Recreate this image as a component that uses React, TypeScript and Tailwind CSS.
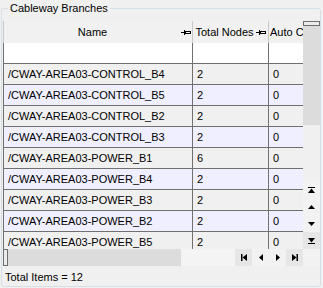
import React from 'react';

const rows = [
  { name: '/CWAY-AREA03-CONTROL_B4', total: '2', auto: '0' },
  { name: '/CWAY-AREA03-CONTROL_B5', total: '2', auto: '0' },
  { name: '/CWAY-AREA03-CONTROL_B2', total: '2', auto: '0' },
  { name: '/CWAY-AREA03-CONTROL_B3', total: '2', auto: '0' },
  { name: '/CWAY-AREA03-POWER_B1', total: '6', auto: '0' },
  { name: '/CWAY-AREA03-POWER_B4', total: '2', auto: '0' },
  { name: '/CWAY-AREA03-POWER_B3', total: '2', auto: '0' },
  { name: '/CWAY-AREA03-POWER_B2', total: '2', auto: '0' },
  { name: '/CWAY-AREA03-POWER_B5', total: '2', auto: '0' },
];

const Pin = () => (
  <svg width="10" height="5" viewBox="0 0 10 5" className="shrink-0">
    <rect x="0" y="2" width="3" height="1" fill="#000" />
    <rect x="3" y="0" width="1" height="5" fill="#000" />
    <rect x="4.5" y="1.5" width="5" height="2" fill="none" stroke="#000" strokeWidth="1" />
  </svg>
);

const Btn = ({ children, dark }: { children: React.ReactNode; dark?: boolean }) => (
  <div className={`w-[17px] h-[17px] shrink-0 flex items-center justify-center ${dark ? 'bg-[#e6e6e6]' : 'bg-[#f2f2f2]'}`}>
    {children}
  </div>
);

export default function App() {
  return (
    <div className="w-[323px] h-[288px] bg-[#f0f0f0] pt-[8px] pl-[1px] font-['Liberation_Sans',Arial,sans-serif] text-[11px] text-black overflow-hidden">
      <div className="relative w-[320px] h-[279px] border border-[#d5dfe5] rounded-[3px] pt-[12px] pl-[1px]">
        <span className="absolute left-[6px] -top-[8px] px-[2px] bg-[#f0f0f0] leading-[14px]">Cableway Branches</span>

        <div className="w-[317px] flex flex-col">
          <div className="flex h-[228px]">
            {/* table */}
            <div className="w-[300px] h-[228px] shrink-0 overflow-hidden flex flex-col">
              <div className="flex h-[22px] shrink-0 border-l border-[#c8c8c8] bg-[#f1f1f1]">
                <div className="w-[189px] shrink-0 flex items-center border-r border-[#c8c8c8] pr-[1px]">
                  <span className="flex-1 text-center">Name</span>
                  <Pin />
                </div>
                <div className="w-[76px] shrink-0 flex items-center border-r border-[#c8c8c8] pr-[2px]">
                  <span className="flex-1 text-center whitespace-nowrap">Total Nodes</span>
                  <Pin />
                </div>
                <div className="w-[80px] shrink-0 flex items-center pl-[1px] whitespace-nowrap">Auto Connect</div>
              </div>

              <div className="flex-1 border-l border-[#707070] overflow-hidden">
                <div className="flex h-[21px] bg-white border-b border-[#707070]">
                  <div className="w-[189px] shrink-0 border-r border-[#707070]" />
                  <div className="w-[76px] shrink-0 border-r border-[#707070]" />
                  <div className="flex-1" />
                </div>
                {rows.map((r, i) => (
                  <div
                    key={r.name}
                    className={`flex h-[21px] border-b border-[#707070] ${i % 2 === 0 ? 'bg-[#f0f0f0]' : 'bg-[#efefff]'}`}
                  >
                    <div className="w-[189px] shrink-0 border-r border-[#707070] pl-[4px] flex items-center whitespace-nowrap overflow-hidden">{r.name}</div>
                    <div className="w-[76px] shrink-0 border-r border-[#707070] pl-[4px] flex items-center">{r.total}</div>
                    <div className="flex-1 pl-[4px] flex items-center">{r.auto}</div>
                  </div>
                ))}
              </div>
            </div>

            {/* vertical scrollbar */}
            <div className="w-[17px] h-[228px] shrink-0 flex flex-col">
              <div className="h-[104px] bg-[#dcdcdc]">
                <div className="h-[5px] border border-[#6e6e6e] bg-[#ececec]" />
              </div>
              <div className="h-[56px] bg-[#f0f0f0]" />
              <Btn>
                <svg width="7" height="6" viewBox="0 0 7 6"><rect x="0" y="0" width="7" height="1" fill="#000" /><polygon points="3.5,1.5 7,6 0,6" fill="#000" /></svg>
              </Btn>
              <Btn>
                <svg width="7" height="4" viewBox="0 0 7 4"><polygon points="3.5,0 7,4 0,4" fill="#000" /></svg>
              </Btn>
              <Btn>
                <svg width="7" height="4" viewBox="0 0 7 4"><polygon points="0,0 7,0 3.5,4" fill="#000" /></svg>
              </Btn>
              <Btn dark>
                <svg width="7" height="6" viewBox="0 0 7 6"><polygon points="0,0 7,0 3.5,4.5" fill="#000" /><rect x="0" y="5" width="7" height="1" fill="#000" /></svg>
              </Btn>
            </div>
          </div>

          {/* horizontal scrollbar + navigator */}
          <div className="flex h-[17px]">
            <div className="w-[178px] shrink-0 bg-[#dcdcdc]">
              <div className="w-[5px] h-[17px] border border-[#6e6e6e] bg-[#ececec]" />
            </div>
            <div className="w-[54px] shrink-0 bg-[#f4f4f4]" />
            <Btn dark>
              <svg width="6" height="7" viewBox="0 0 6 7"><rect x="0" y="0" width="1.5" height="7" fill="#000" /><polygon points="1.5,3.5 6,0 6,7" fill="#000" /></svg>
            </Btn>
            <Btn>
              <svg width="4" height="7" viewBox="0 0 4 7"><polygon points="0,3.5 4,0 4,7" fill="#000" /></svg>
            </Btn>
            <Btn>
              <svg width="4" height="7" viewBox="0 0 4 7"><polygon points="0,0 4,3.5 0,7" fill="#000" /></svg>
            </Btn>
            <Btn dark>
              <svg width="6" height="7" viewBox="0 0 6 7"><polygon points="0,0 4.5,3.5 0,7" fill="#000" /><rect x="4.5" y="0" width="1.5" height="7" fill="#000" /></svg>
            </Btn>
            <div className="w-[17px] shrink-0 bg-[#f2f2f2]" />
          </div>

          <div className="h-[20px] flex items-center pl-[2px] pt-[2px]">Total Items = 12</div>
        </div>
      </div>
    </div>
  );
}
